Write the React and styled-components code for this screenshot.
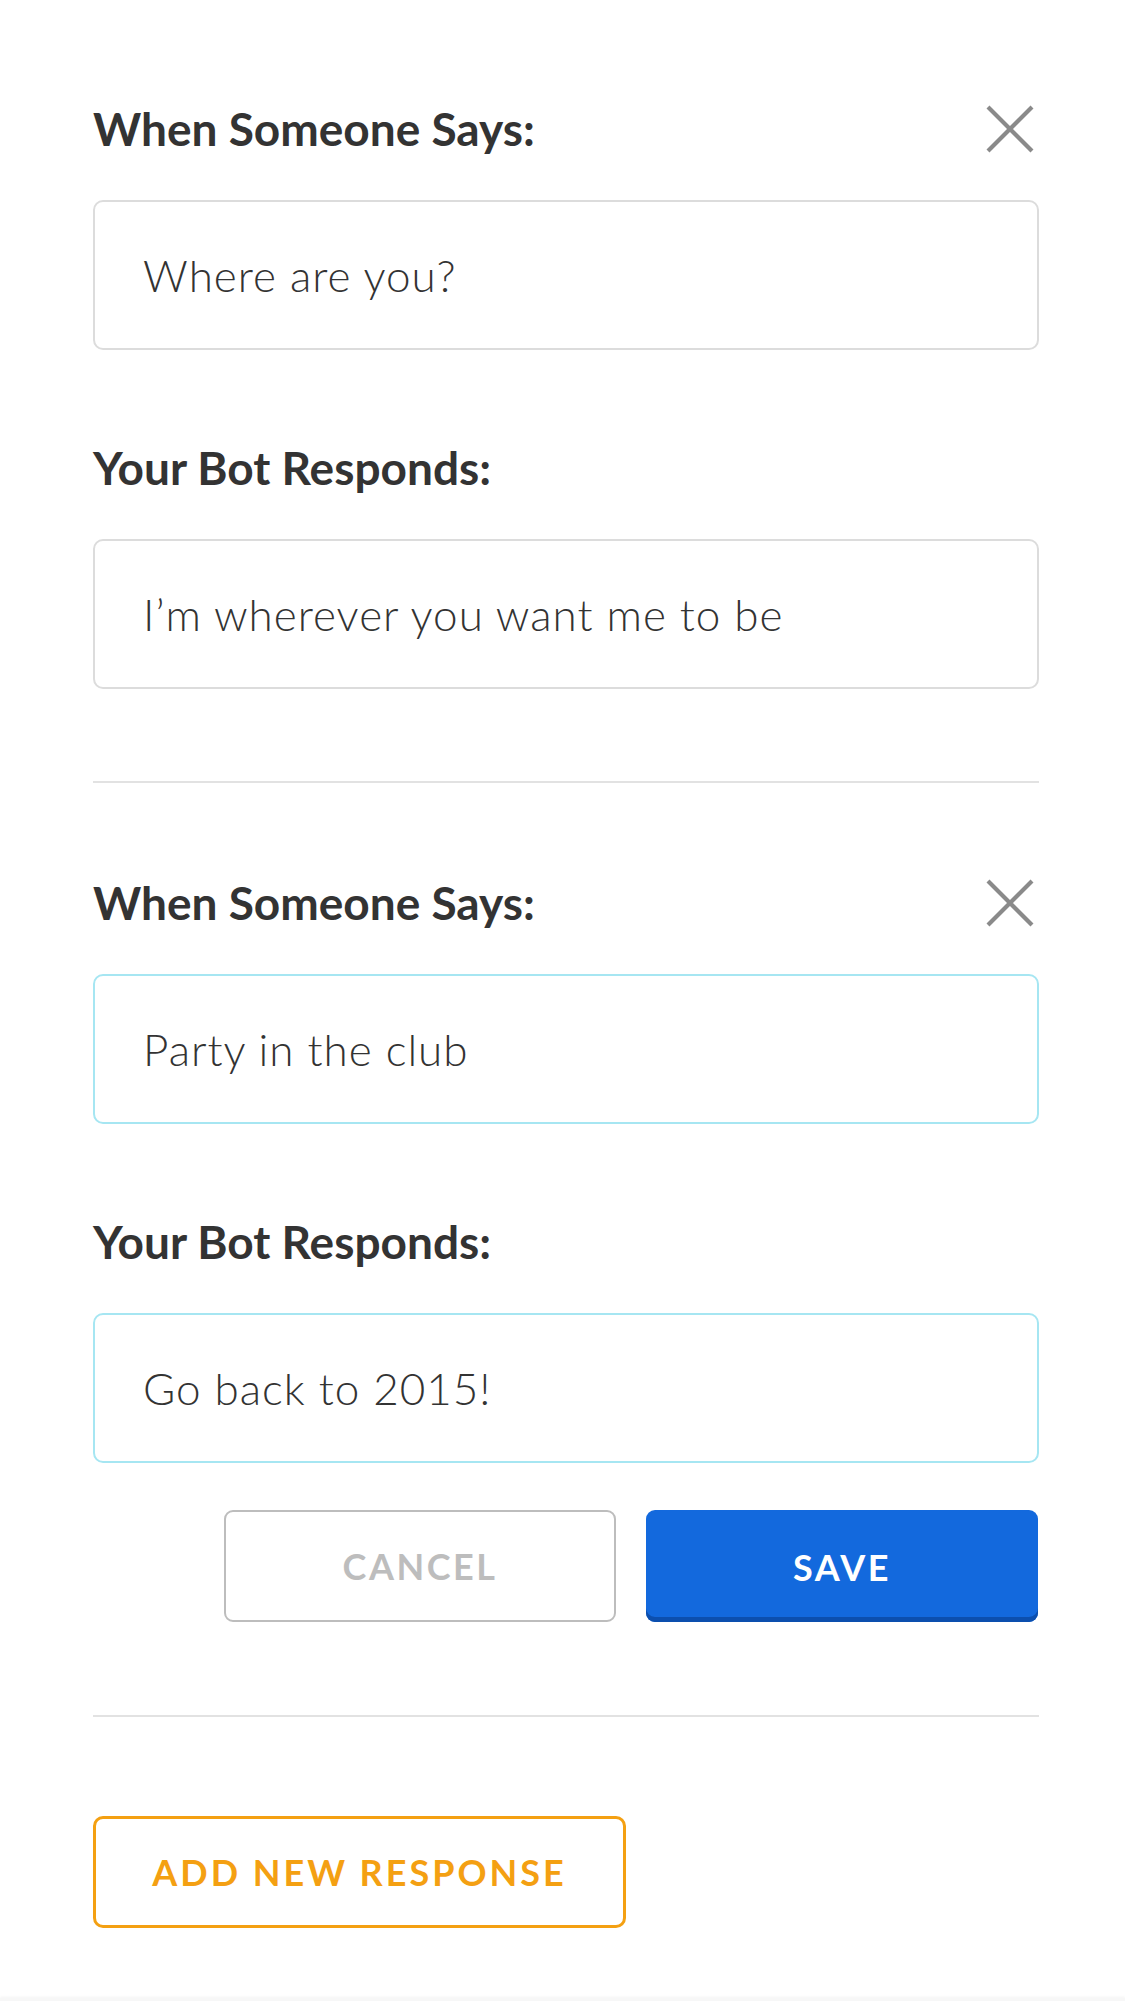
import React from "react";
import styled, { createGlobalStyle } from "styled-components";

const GlobalStyle = createGlobalStyle`
  html, body {
    margin: 0;
    padding: 0;
    background: #ffffff;
  }
  body {
    font-family: Lato, "Open Sans", "Liberation Sans", sans-serif;
    -webkit-font-smoothing: antialiased;
  }
  * { box-sizing: border-box; }
`;

const Page = styled.div`
  width: 1125px;
  min-height: 2001px;
  display: flex;
  flex-direction: column;
  background: #fff;
`;

const Content = styled.main`
  width: 1039px;
  padding: 101px 0 0 93px;
  display: flex;
  flex-direction: column;
  flex: 1;
`;

const Section = styled.section`
  display: flex;
  flex-direction: column;
`;

const Field = styled.div`
  display: flex;
  flex-direction: column;
  gap: 44px;
  margin-bottom: ${(p) => (p.$last ? "0" : "90px")};
`;

const LabelRow = styled.div`
  display: flex;
  align-items: center;
  justify-content: space-between;
`;

const Label = styled.label`
  font-family: Lato, "Open Sans", sans-serif;
  font-weight: 700;
  font-size: 46px;
  line-height: 55px;
  color: #333333;
  letter-spacing: 0px;
`;

const CloseButton = styled.button`
  width: 50px;
  height: 50px;
  margin-right: 4px;
  padding: 0;
  border: none;
  background: transparent;
  display: flex;
  align-items: center;
  justify-content: center;
  cursor: pointer;
`;

const Input = styled.div`
  height: 150px;
  border: 2px solid ${(p) => (p.$active ? "#a6e6f2" : "#dcdcdc")};
  border-radius: 10px;
  display: flex;
  align-items: center;
  padding-left: 48px;
  font-family: Lato, "Open Sans", sans-serif;
  font-weight: 300;
  font-size: 44px;
  letter-spacing: 1px;
  color: #333333;
  background: #fff;
`;

const Divider = styled.hr`
  width: 100%;
  height: 2px;
  border: none;
  margin: ${(p) => p.$margin || "92px 0"};
  background: #e2e2e2;
`;

const ButtonRow = styled.div`
  display: flex;
  justify-content: flex-end;
  gap: 30px;
  margin-top: 47px;
  padding-right: 1px;
`;

const ActionButton = styled.button`
  width: 392px;
  height: 112px;
  border-radius: 9px;
  font-family: Lato, "Open Sans", sans-serif;
  font-weight: 700;
  font-size: 36px;
  letter-spacing: 2.5px;
  text-transform: uppercase;
  display: flex;
  align-items: center;
  justify-content: center;
  cursor: pointer;
  ${(p) =>
    p.$primary
      ? `
    background: #1369dd;
    color: #ffffff;
    border: none;
    box-shadow: inset 0 -5px 0 #0c4fae;
    padding-top: 2px;
  `
      : `
    background: #ffffff;
    color: #bdbdbd;
    border: 2px solid #bdbdbd;
  `}
`;

const AddButton = styled.button`
  align-self: flex-start;
  width: 533px;
  height: 112px;
  border: 3px solid #f4a012;
  border-radius: 10px;
  background: #fff;
  color: #f4a012;
  font-family: Lato, "Open Sans", sans-serif;
  font-weight: 700;
  font-size: 36px;
  letter-spacing: 3px;
  text-transform: uppercase;
  display: flex;
  align-items: center;
  justify-content: center;
  margin-top: 7px;
  cursor: pointer;
`;

const BottomBar = styled.div`
  margin-top: auto;
  height: 3px;
  background: #f7f7f7;
  box-shadow: 0 -1px 3px rgba(0, 0, 0, 0.05);
`;

const CloseIcon = () => (
  <svg width="50" height="50" viewBox="0 0 50 50" aria-hidden="true">
    <path
      d="M3 3 L47 47 M47 3 L3 47"
      stroke="#8a8a8a"
      strokeWidth="4.2"
      strokeLinecap="butt"
      fill="none"
    />
  </svg>
);

const Response = ({ says, responds, active }) => (
  <Section>
    <Field>
      <LabelRow>
        <Label>When Someone Says:</Label>
        <CloseButton aria-label="Remove response">
          <CloseIcon />
        </CloseButton>
      </LabelRow>
      <Input $active={active}>{says}</Input>
    </Field>
    <Field $last>
      <LabelRow>
        <Label>Your Bot Responds:</Label>
      </LabelRow>
      <Input $active={active}>{responds}</Input>
    </Field>
  </Section>
);

export default function App() {
  return (
    <Page>
      <GlobalStyle />
      <Content>
        <Response says="Where are you?" responds="I’m wherever you want me to be" />
        <Divider />
        <Response says="Party in the club" responds="Go back to 2015!" active />
        <ButtonRow>
          <ActionButton>Cancel</ActionButton>
          <ActionButton $primary>Save</ActionButton>
        </ButtonRow>
        <Divider $margin="93px 0 92px" />
        <AddButton>Add New Response</AddButton>
      </Content>
      <BottomBar />
    </Page>
  );
}
